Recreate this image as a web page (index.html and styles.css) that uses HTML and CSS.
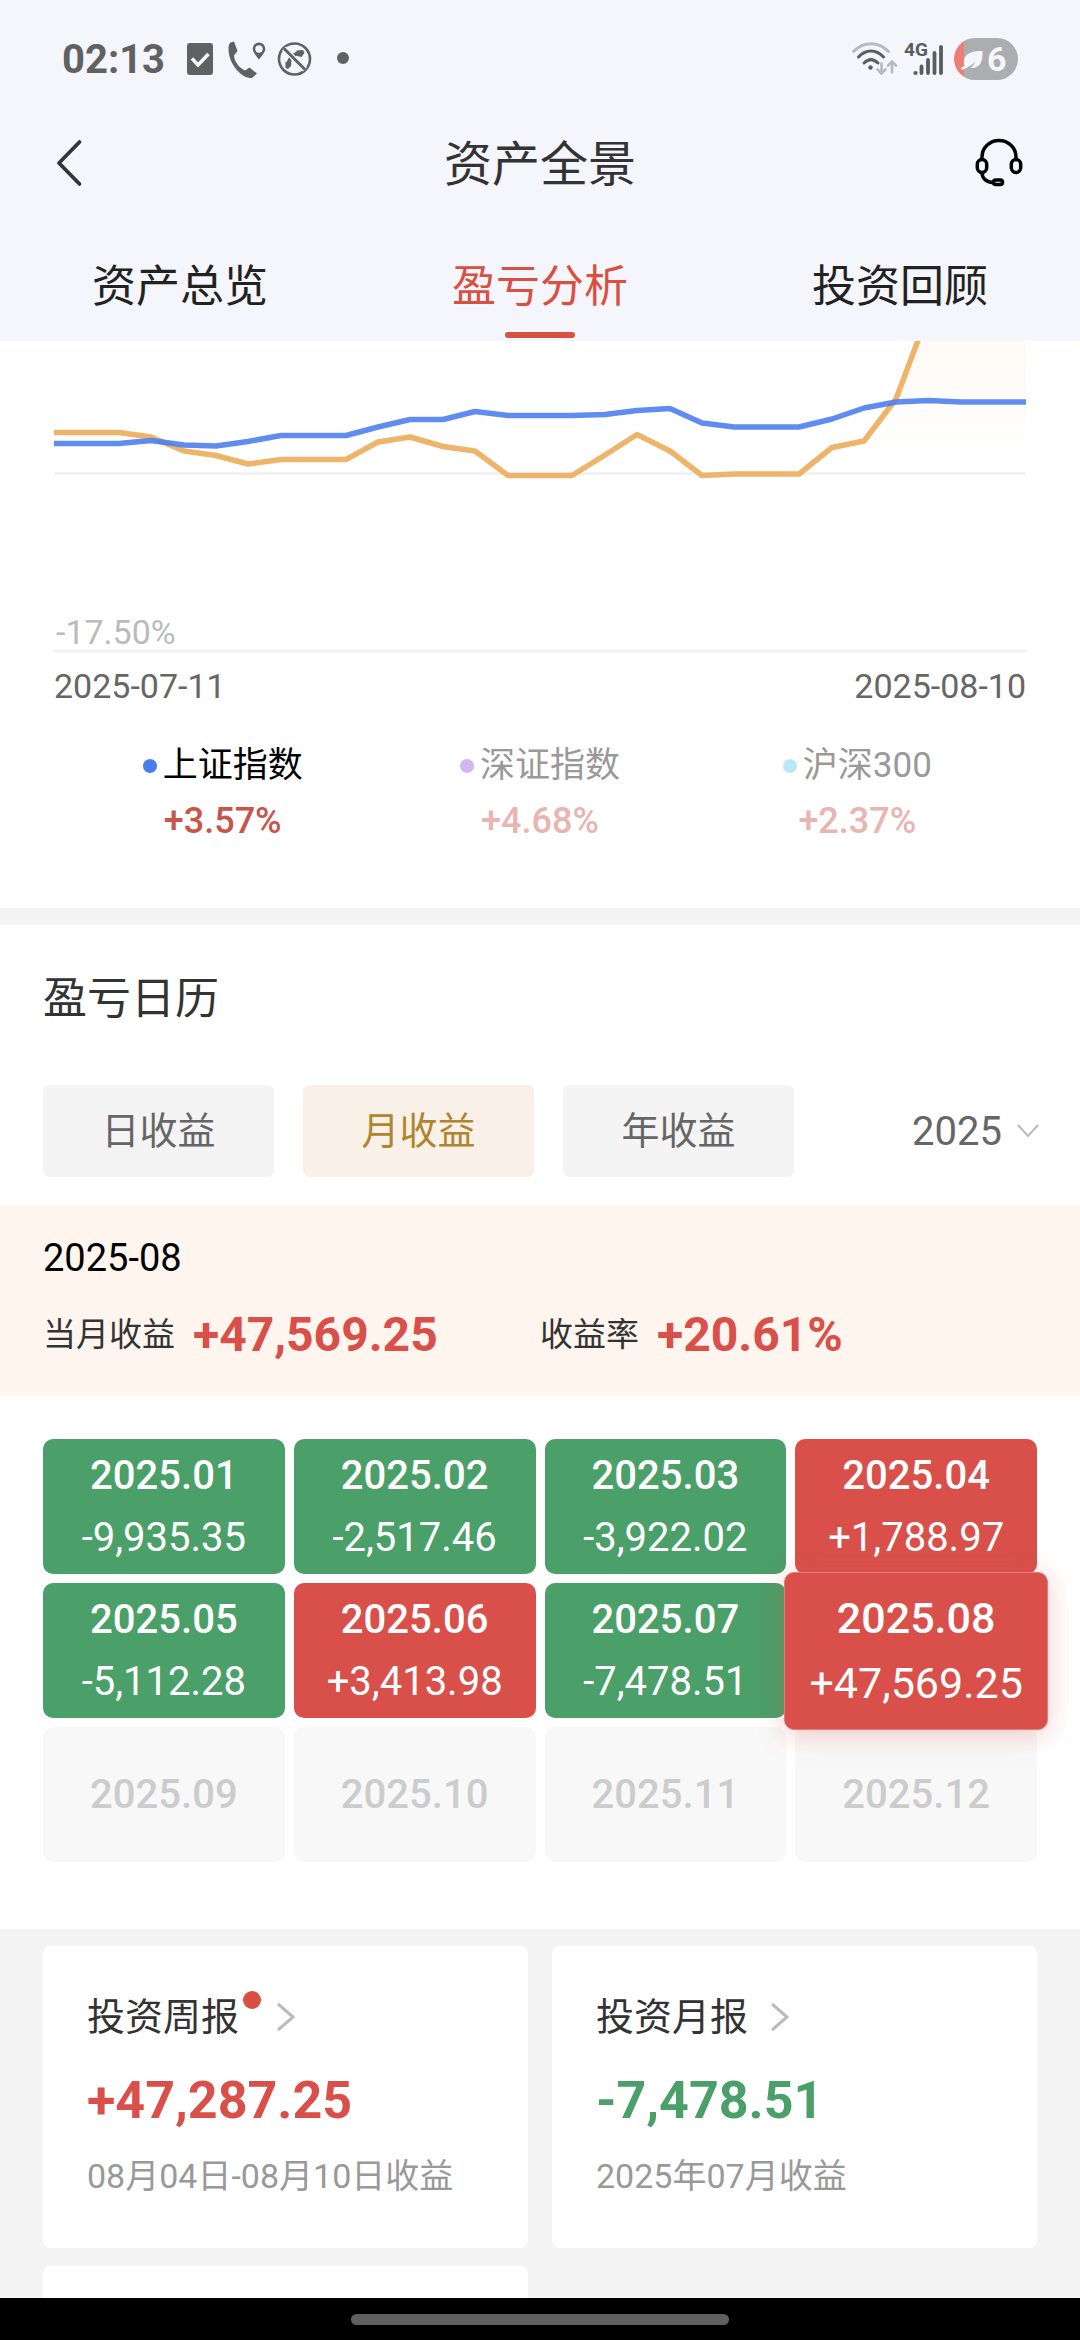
FILE: index.html
```html
<!DOCTYPE html>
<html lang="zh-CN">
<head>
<meta charset="utf-8">
<meta name="viewport" content="width=device-width">
<title>资产全景</title>
<link rel="stylesheet" href="styles.css">
</head>
<body>
<div class="app">
  <header class="top">
    <div class="status">
      <span class="clock">02:13</span>
      <svg class="status-left" width="164" height="42" viewBox="0 0 164 42" aria-hidden="true">
        <rect x="2" y="5" width="26" height="32" rx="3" fill="#606163"/>
        <path d="M7 20.500l6 6.500 10.500-11" fill="none" stroke="#f5f6fb" stroke-width="3.500"/>
        <path d="M49 3.500l3.500 9.500-3.500 4.500c.5 6.500 5 12 11 15l4.500-3 7.500 6-5 4.500c-3 .5-6.500-1-9-2.500C50 32 43.500 22 43.500 11c0-3 .5-5.500 2-6.500z" fill="#606163"/>
        <path fill-rule="evenodd" d="M74 4.500a6.300 6.300 0 0 1 6.300 6.300c0 3.700-3.800 7.200-6.300 11-2.500-3.800-6.300-7.300-6.300-11a6.300 6.300 0 0 1 6.300-6.300zm0 2.800a3.700 3.700 0 1 0 0 7.400 3.700 3.700 0 0 0 0-7.400z" fill="#606163"/>
        <circle cx="109.500" cy="21" r="15.500" fill="none" stroke="#606163" stroke-width="2.600"/>
        <path d="M103 29c0-5 1-8 4-10.500s6.500-4 10-4" fill="none" stroke="#606163" stroke-width="3.400"/>
        <path d="M100.500 24l6-1.500-.5 5.500-3 3-2.500-1zM111.500 12.500l6.500-.5 1.500 3-3 4-4.500-1z" fill="#606163"/>
        <path d="M99 10.500l21 21" stroke="#f5f6fb" stroke-width="5.500"/>
        <path d="M99 10.500l21 21" stroke="#606163" stroke-width="3"/>
        <circle cx="158" cy="20" r="6" fill="#606163"/>
      </svg>
      <svg class="status-right" width="96" height="42" viewBox="0 0 96 42" aria-hidden="true">
        <g fill="none" stroke-linecap="round" stroke-width="3">
          <path d="M3.500 13.500c10-10.500 25-10.500 35 0" stroke="#b9babd"/>
          <path d="M8.500 19c7.500-8 17.500-8 25 0M14 25c4.500-4.500 9.500-4.500 14 0" stroke="#5b5c5f"/>
          <path d="M31.500 25.500v9M27.500 31.500l4 4 4-4M42 34.500v-9M38 27.500l4-4 4 4" stroke="#b9babd" stroke-width="2.600"/>
        </g>
        <circle cx="20.500" cy="29.500" r="2.200" fill="#5b5c5f"/>
        <text class="net" x="54" y="17.500">4G</text>
        <circle cx="65.500" cy="35" r="2.100" fill="#5b5c5f"/>
        <path d="M71.500 28.500v6.500M78 22v13M84.500 15v20M91 9v26" stroke="#5b5c5f" stroke-width="3.800" stroke-linecap="round"/>
      </svg>
      <span class="battery">
        <svg width="24" height="24" viewBox="0 0 24 24" aria-hidden="true"><path d="M1.500 21.500C5.500 20 8.500 17.500 11 14" fill="none" stroke="#f5f6fb" stroke-width="2.600" stroke-linecap="round"/><path d="M3 18C1.500 9 7 3.500 21.500 4c.5 11-2.500 17.500-12 17 2-1.500 3.500-3.500 4.500-6.500-2.500 3-5.500 5-8.500 5.500z" fill="#f5f6fb"/></svg>
        <span>6</span>
      </span>
    </div>
    <div class="titlebar">
      <button class="icon-btn back" aria-label="返回"><svg width="28" height="48" viewBox="0 0 28 48"><path d="M23.500 3L3 24l20.500 21" fill="none" stroke="#333638" stroke-width="3.800" stroke-linecap="round" stroke-linejoin="round"/></svg></button>
      <h1>资产全景</h1>
      <button class="icon-btn support" aria-label="客服"><svg width="50" height="50" viewBox="0 0 50 50" fill="none" stroke="#000" stroke-width="3.500"><path d="M8 21v-2a17 16.500 0 0 1 34 0v2"/><rect x="3.300" y="21.500" width="9.400" height="13" rx="4.700"/><rect x="37.300" y="21.500" width="9.400" height="13" rx="4.700"/><path d="M8 34.500c0 5.500 4 9.500 11 10"/><rect x="19.500" y="42" width="9" height="4.500" rx="2.200"/></svg></button>
    </div>
    <nav class="tabs">
      <a href="#overview">资产总览</a>
      <a href="#analysis" class="on" aria-current="page">盈亏分析</a>
      <a href="#review">投资回顾</a>
    </nav>
  </header>

  <main class="content">
    <section class="trend">
      <div class="plot">
        <svg viewBox="0 0 972 312" role="img" aria-label="收益走势">
          <defs><linearGradient id="fade" x1="0" y1="0" x2="0" y2="1"><stop offset="0" stop-color="#edb46a" stop-opacity=".07"/><stop offset="1" stop-color="#edb46a" stop-opacity="0"/></linearGradient></defs>
          <path d="M0 132.500h972M0 310h972" stroke="#f2f2f2" stroke-width="3"/>
          <path d="M778 106L810 100 842 58 863 0H972V122H778z" fill="url(#fade)"/>
          <g fill="none" stroke-width="5.500" stroke-linejoin="round">
            <path stroke="#edb46a" d="M0 91.500H65L97 96 130 110 162 114.500 194 123 227 118.500H292L324 101 356 96 389 105.500 421 110 454 134.500H518L551 114 583 93.500 616 110 648 134.500 680 133H745L778 106.500 810 100 842 58 875-30"/>
            <path stroke="#4a7cf0" stroke-opacity=".88" d="M0 102.500H65L97 99.500 130 104 162 105 194 100.500 227 94.500H292L324 86 356 78.500H389L421 70.500 454 74.500H518L551 73.500 583 69.500 616 67.500 648 82 680 86H745L778 78 810 67 842 61 875 59.500 907 61H972"/>
          </g>
        </svg>
        <span class="tick">-17.50%</span>
      </div>
      <div class="range"><span>2025-07-11</span><span>2025-08-10</span></div>
      <ul class="legend">
        <li><span class="name"><i class="dot sh"></i>上证指数</span><span class="pct">+3.57%</span></li>
        <li class="off"><span class="name"><i class="dot sz"></i>深证指数</span><span class="pct">+4.68%</span></li>
        <li class="off"><span class="name"><i class="dot hs"></i>沪深300</span><span class="pct">+2.37%</span></li>
      </ul>
    </section>

    <section class="calendar">
      <h2>盈亏日历</h2>
      <div class="filters">
        <button>日收益</button>
        <button class="on">月收益</button>
        <button>年收益</button>
        <label class="year">
          <select aria-label="年份"><option>2025</option></select>
          <svg width="22" height="14" viewBox="0 0 22 14" aria-hidden="true"><path d="M1 1l10 11L21 1" fill="none" stroke="#bbb" stroke-width="2"/></svg>
        </label>
      </div>
      <div class="summary">
        <p class="month">2025-08</p>
        <dl>
          <div><dt>当月收益</dt><dd>+47,569.25</dd></div>
          <div><dt>收益率</dt><dd>+20.61%</dd></div>
        </dl>
      </div>
      <div class="months">
        <button class="loss"><b>2025.01</b><span>-9,935.35</span></button>
        <button class="loss"><b>2025.02</b><span>-2,517.46</span></button>
        <button class="loss"><b>2025.03</b><span>-3,922.02</span></button>
        <button class="gain"><b>2025.04</b><span>+1,788.97</span></button>
        <button class="loss"><b>2025.05</b><span>-5,112.28</span></button>
        <button class="gain"><b>2025.06</b><span>+3,413.98</span></button>
        <button class="loss"><b>2025.07</b><span>-7,478.51</span></button>
        <button class="gain current"><b>2025.08</b><span>+47,569.25</span></button>
        <button disabled><b>2025.09</b></button>
        <button disabled><b>2025.10</b></button>
        <button disabled><b>2025.11</b></button>
        <button disabled><b>2025.12</b></button>
      </div>
    </section>

    <section class="reports">
      <a class="card" href="#weekly">
        <span class="head">投资周报<i class="badge"></i><svg width="20" height="30" viewBox="0 0 20 30" aria-hidden="true"><path d="M2 2l15 13L2 28" fill="none" stroke="#bbb" stroke-width="3"/></svg></span>
        <strong class="up">+47,287.25</strong>
        <span class="note">08月04日-08月10日收益</span>
      </a>
      <a class="card" href="#monthly">
        <span class="head">投资月报<svg width="20" height="30" viewBox="0 0 20 30" aria-hidden="true"><path d="M2 2l15 13L2 28" fill="none" stroke="#bbb" stroke-width="3"/></svg></span>
        <strong class="down">-7,478.51</strong>
        <span class="note">2025年07月收益</span>
      </a>
      <a class="card" href="#more" aria-label="更多报告"></a>
    </section>
  </main>

  <footer class="gesture"><span></span></footer>
</div>
</body>
</html>
```
FILE: styles.css
```css
* { box-sizing: border-box; margin: 0; padding: 0; }

body {
  font-family: Roboto, "Noto Sans CJK SC", sans-serif;
  color: #333;
  background: #fff;
}

button, select { font: inherit; color: inherit; border: 0; background: none; }
a { color: inherit; text-decoration: none; }
ul { list-style: none; }
svg { display: block; }

.app { display: flex; flex-direction: column; height: 100vh; }

/* header */
.top { background: #f5f6fb; }
.status { display: flex; align-items: center; height: 118px; padding: 0 62px; }
.clock { font-size: 40px; font-weight: 700; color: #606163; }
.status-left { margin-left: 20px; }
.status-right { margin-left: auto; }
.net { font: 700 19px Roboto, sans-serif; fill: #5b5c5f; }
.battery {
  display: flex; align-items: center; gap: 2px;
  height: 42px; width: 64px; margin-left: 8px; padding-left: 7px;
  border-radius: 21px;
  background: linear-gradient(90deg, #e97f76 10px, #acadb0 10px);
  color: #f5f6fb; font-size: 34px; font-weight: 700;
}

.titlebar { display: grid; grid-template-columns: 60px 1fr 60px; align-items: center; height: 90px; padding: 0 56px; }
.titlebar h1 { padding-top: 4px; font-size: 48px; font-weight: 400; text-align: center; line-height: 72px; }
.support { justify-self: end; }

.tabs { display: grid; grid-template-columns: repeat(3, 1fr); height: 133px; }
.tabs a {
  display: flex; flex-direction: column; align-items: center; justify-content: space-between;
  padding: 49px 0 3px;
  font-size: 44px; line-height: 60px; color: #222;
}
.tabs .on { color: #d95043; }
.tabs .on::after { content: ""; width: 70px; height: 6px; border-radius: 3px; background: #d95043; }

.content { flex: 1; min-height: 0; overflow: hidden; background: #f4f4f4; }

/* trend chart */
.trend { background: #fff; padding: 0 54px 56px; }
.plot { position: relative; }
.plot svg { width: 100%; height: auto; }
.tick { position: absolute; left: 2px; bottom: 1px; font-size: 34px; line-height: 40px; color: #bbb; }
.range { display: flex; justify-content: space-between; font-size: 34px; line-height: 40px; padding-top: 13px; color: #666; }
.legend { display: grid; grid-template-columns: repeat(3, 1fr); padding: 36px 10px 0; text-align: center; }
.legend li { display: flex; flex-direction: column; align-items: center; }
.name { display: flex; align-items: center; gap: 6px; font-size: 35px; line-height: 48px; color: #000; }
.pct { font-size: 36px; font-weight: 500; line-height: 62px; color: #c9544c; }
.off .name { color: #999; }
.off .pct { color: #e8b5b1; }
.dot { width: 14px; height: 14px; border-radius: 50%; }
.sh { background: #4a7cf0; }
.sz { background: #d2b6f1; }
.hs { background: #b9e8f8; }

/* profit calendar */
.calendar { margin-top: 17px; background: #fff; padding-bottom: 67px; }
.calendar h2 { padding: 42px 43px 0; font-size: 44px; font-weight: 400; line-height: 64px; }
.filters { display: grid; grid-template-columns: repeat(3, 231px) 1fr; column-gap: 29px; padding: 54px 41px 29px 43px; }
.filters button { height: 92px; border-radius: 6px; background: #f4f4f4; color: #666; font-size: 38px; line-height: 92px; }
.filters .on { background: #f9f1e7; color: #b0852f; }
.year { display: flex; align-items: center; justify-content: flex-end; gap: 15px; font-size: 40px; color: #666; }
.year select { appearance: none; }

.summary { background: #fdf5ee; padding: 30px 43px 29px; }
.month { font-size: 38px; line-height: 44px; color: #000; }
.summary dl { display: grid; grid-template-columns: 1fr 1fr; }
.summary dl div { display: flex; align-items: center; gap: 18px; padding-top: 23px; }
.summary dt { font-size: 33px; line-height: 64px; color: #333; }
.summary dd { font-size: 48px; font-weight: 700; line-height: 64px; color: #d9504a; }

.months { display: grid; grid-template-columns: repeat(4, 1fr); grid-auto-rows: 135px; gap: 9px; padding: 43px 43px 0; }
.months button {
  display: flex; flex-direction: column; align-items: center; justify-content: center;
  border-radius: 10px; background: #f8f8f8; color: #ccc;
  font-size: 40px; line-height: 62px;
}
.months b { font-weight: 500; }
.months .loss { background: #4b9f69; color: #fff; }
.months .gain { background: #d9504a; color: #fff; }
.months .current {
  position: relative; z-index: 1; margin: -11px -11px -12px;
  border: 1px solid #ea7a76;
  box-shadow: 0 4px 28px rgba(217, 80, 74, .3);
  font-size: 43px; line-height: 65px;
}

/* report cards */
.reports { display: grid; grid-template-columns: 1fr 1fr; gap: 18px 24px; padding: 17px 43px; }
.card { display: flex; flex-direction: column; height: 302px; padding: 42px 44px; border-radius: 8px; background: #fff; }
.head { display: flex; align-items: center; font-size: 38px; line-height: 58px; }
.head svg { margin-left: 22px; }
.badge { width: 18px; height: 18px; margin: 0 -7px 34px 4px; border-radius: 50%; background: #d95043; }
.card strong { padding-top: 22px; font-size: 52px; line-height: 66px; }
.up { color: #d9504a; }
.down { color: #4b9f69; }
.note { padding-top: 18px; font-size: 34px; line-height: 48px; color: #999; }

.gesture { display: flex; justify-content: center; height: 42px; padding-top: 16px; background: #000; }
.gesture span { width: 35%; height: 11px; border-radius: 6px; background: #5f5f5f; }
```
